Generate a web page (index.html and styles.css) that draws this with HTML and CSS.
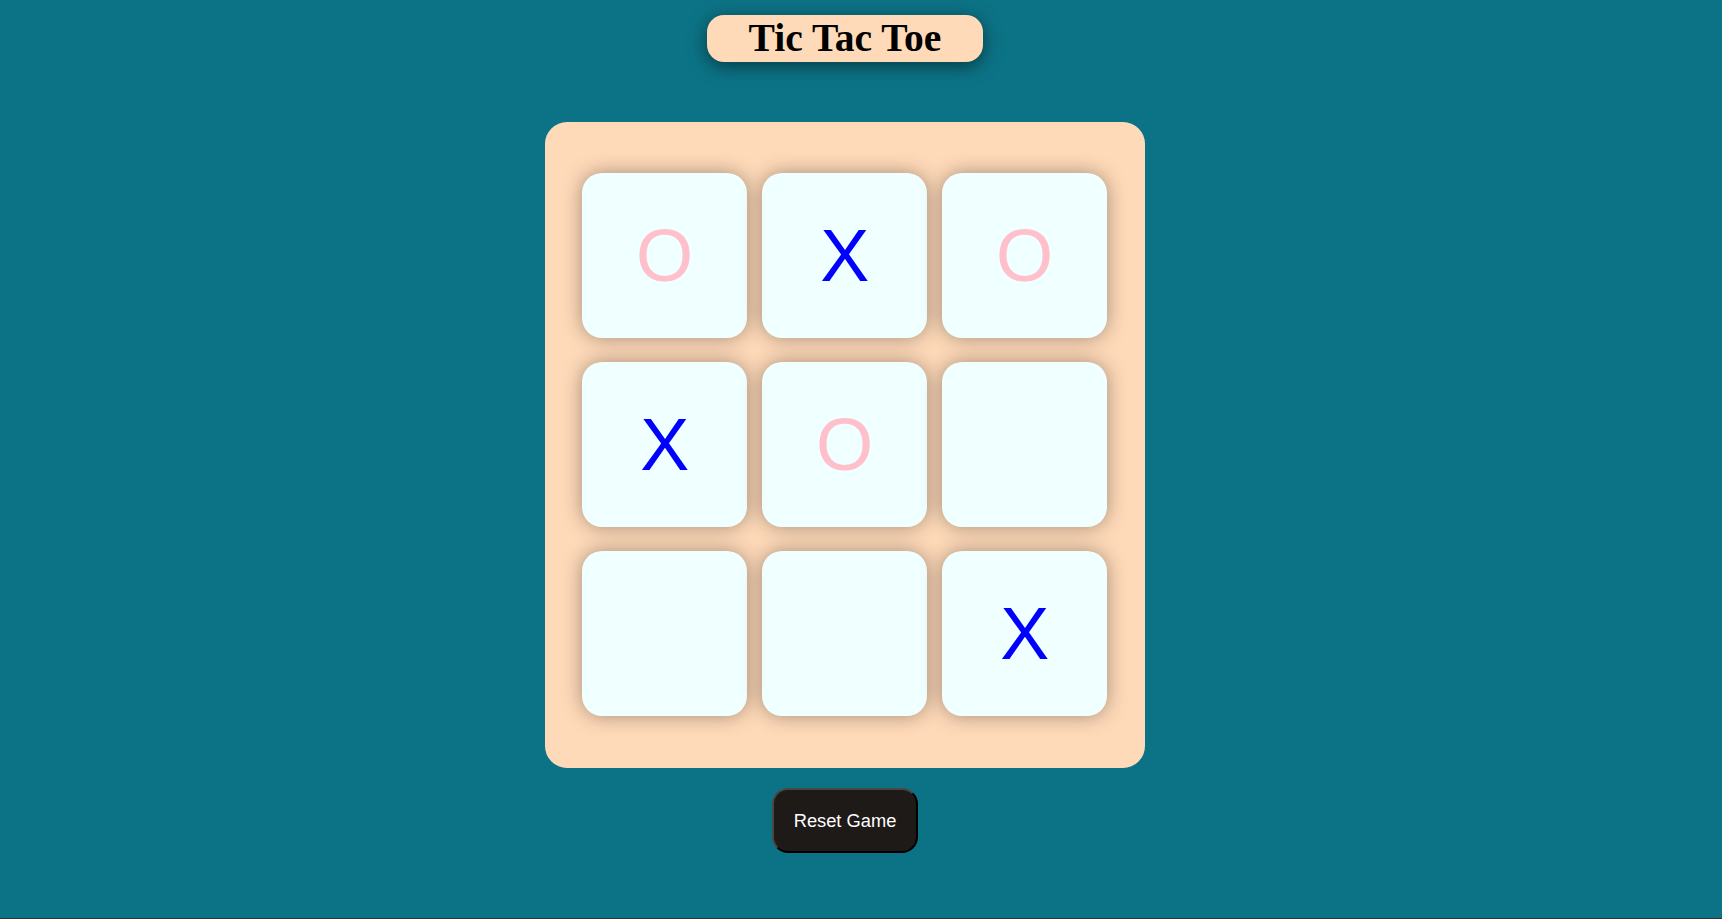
FILE: index.html
```html
<!DOCTYPE html>
<html lang="en">
<head>
<meta charset="utf-8">
<title>Tic Tac Toe</title>
<link rel="stylesheet" href="styles.css">
</head>
<body>
<main class="page">
  <h1 class="title">Tic Tac Toe</h1>
  <div class="board">
    <button class="cell o">O</button>
    <button class="cell x">X</button>
    <button class="cell o">O</button>
    <button class="cell x">X</button>
    <button class="cell o">O</button>
    <button class="cell"></button>
    <button class="cell"></button>
    <button class="cell"></button>
    <button class="cell x">X</button>
  </div>
  <button class="reset">Reset Game</button>
</main>
</body>
</html>
```
FILE: styles.css
```css
html {
  background: #333333;
}
body {
  margin: 0;
  height: 918px;
  background: #0c7386;
  overflow: hidden;
}
.page {
  width: 1690px;
  display: flex;
  flex-direction: column;
  align-items: center;
  padding-top: 15px;
}
.title {
  margin: 0;
  height: 47px;
  width: 276px;
  box-sizing: border-box;
  display: flex;
  align-items: center;
  justify-content: center;
  background: #ffdab9;
  border-radius: 17px;
  font-family: "Liberation Serif", "Times New Roman", serif;
  font-weight: bold;
  font-size: 39.6px;
  line-height: 1;
  color: #000;
  box-shadow: 0 4px 18px rgba(0, 0, 0, 0.5);
}
.board {
  margin-top: 60px;
  width: 600px;
  height: 646px;
  box-sizing: border-box;
  padding: 51px 37px;
  background: #ffdab9;
  border-radius: 22px;
  display: grid;
  grid-template-columns: repeat(3, 165.4px);
  grid-template-rows: repeat(3, 165.4px);
  column-gap: 14.6px;
  row-gap: 23.6px;
}
.cell {
  border: none;
  margin: 0;
  padding: 0;
  background: #f0ffff;
  border-radius: 20px;
  box-shadow: 0 0 20px rgba(0, 0, 0, 0.36);
  font-family: "Liberation Sans", Arial, sans-serif;
  font-size: 73.5px;
  line-height: 1;
  display: flex;
  align-items: center;
  justify-content: center;
}
.cell.o {
  color: #ffc0cb;
}
.cell.x {
  color: #0000ff;
}
.reset {
  margin-top: 20px;
  width: 146px;
  height: 65px;
  background: #1e1a17;
  color: #fff;
  border: 2px solid;
  border-color: #4a4644 #000 #000 #4a4644;
  border-radius: 16px;
  font-family: "Liberation Sans", Arial, sans-serif;
  font-size: 18.3px;
  padding: 0;
}
```
